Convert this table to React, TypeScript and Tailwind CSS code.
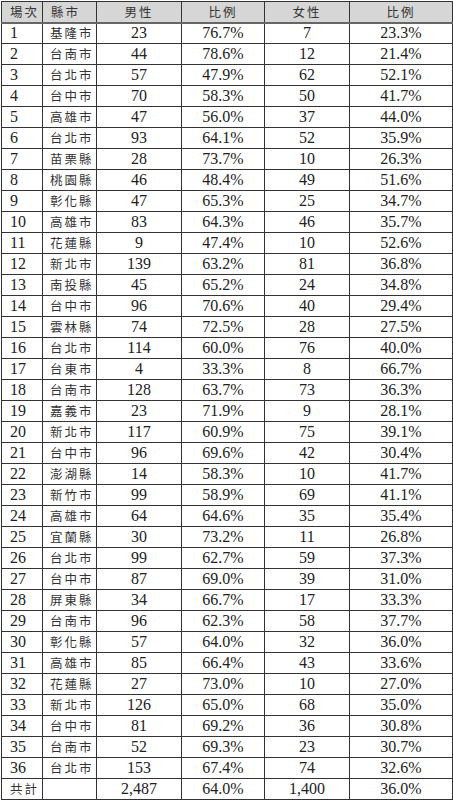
const rows: [string, string, string, string, string, string][] = [
  ["1", "基隆市", "23", "76.7%", "7", "23.3%"],
  ["2", "台南市", "44", "78.6%", "12", "21.4%"],
  ["3", "台北市", "57", "47.9%", "62", "52.1%"],
  ["4", "台中市", "70", "58.3%", "50", "41.7%"],
  ["5", "高雄市", "47", "56.0%", "37", "44.0%"],
  ["6", "台北市", "93", "64.1%", "52", "35.9%"],
  ["7", "苗栗縣", "28", "73.7%", "10", "26.3%"],
  ["8", "桃園縣", "46", "48.4%", "49", "51.6%"],
  ["9", "彰化縣", "47", "65.3%", "25", "34.7%"],
  ["10", "高雄市", "83", "64.3%", "46", "35.7%"],
  ["11", "花蓮縣", "9", "47.4%", "10", "52.6%"],
  ["12", "新北市", "139", "63.2%", "81", "36.8%"],
  ["13", "南投縣", "45", "65.2%", "24", "34.8%"],
  ["14", "台中市", "96", "70.6%", "40", "29.4%"],
  ["15", "雲林縣", "74", "72.5%", "28", "27.5%"],
  ["16", "台北市", "114", "60.0%", "76", "40.0%"],
  ["17", "台東市", "4", "33.3%", "8", "66.7%"],
  ["18", "台南市", "128", "63.7%", "73", "36.3%"],
  ["19", "嘉義市", "23", "71.9%", "9", "28.1%"],
  ["20", "新北市", "117", "60.9%", "75", "39.1%"],
  ["21", "台中市", "96", "69.6%", "42", "30.4%"],
  ["22", "澎湖縣", "14", "58.3%", "10", "41.7%"],
  ["23", "新竹市", "99", "58.9%", "69", "41.1%"],
  ["24", "高雄市", "64", "64.6%", "35", "35.4%"],
  ["25", "宜蘭縣", "30", "73.2%", "11", "26.8%"],
  ["26", "台北市", "99", "62.7%", "59", "37.3%"],
  ["27", "台中市", "87", "69.0%", "39", "31.0%"],
  ["28", "屏東縣", "34", "66.7%", "17", "33.3%"],
  ["29", "台南市", "96", "62.3%", "58", "37.7%"],
  ["30", "彰化縣", "57", "64.0%", "32", "36.0%"],
  ["31", "高雄市", "85", "66.4%", "43", "33.6%"],
  ["32", "花蓮縣", "27", "73.0%", "10", "27.0%"],
  ["33", "新北市", "126", "65.0%", "68", "35.0%"],
  ["34", "台中市", "81", "69.2%", "36", "30.8%"],
  ["35", "台南市", "52", "69.3%", "23", "30.7%"],
  ["36", "台北市", "153", "67.4%", "74", "32.6%"],
];

const cell = "border border-[#333] h-[21px] p-0 leading-none";
const num = "text-center";
const cjk = "font-['Noto_Sans_CJK_TC',sans-serif] text-[12.5px] tracking-[2px] text-[#333]";

const App = () => {
  return (
    <div className="bg-white w-[453px] h-[800px] pl-[1px] pt-[1px] font-['Liberation_Serif','Noto_Sans_CJK_TC',serif] text-[16px] text-[#222]">
      <table className="table-fixed border-collapse w-[451px]">
        <colgroup>
          <col className="w-[41px]" />
          <col className="w-[54px]" />
          <col className="w-[85px]" />
          <col className="w-[83px]" />
          <col className="w-[85px]" />
          <col className="w-[103px]" />
        </colgroup>
        <thead>
          <tr className="bg-[#d6d6d6]">
            <th className={`${cell} ${cjk} border-b-2 border-b-[#666] text-left pl-[8px] font-normal`}>場次</th>
            <th className={`${cell} ${cjk} border-b-2 border-b-[#666] text-left pl-[8px] font-normal`}>縣市</th>
            <th className={`${cell} ${cjk} border-b-2 border-b-[#666] text-center font-normal`}>男性</th>
            <th className={`${cell} ${cjk} border-b-2 border-b-[#666] text-center font-normal`}>比例</th>
            <th className={`${cell} ${cjk} border-b-2 border-b-[#666] text-center font-normal`}>女性</th>
            <th className={`${cell} ${cjk} border-b-2 border-b-[#666] text-center font-normal`}>比例</th>
          </tr>
        </thead>
        <tbody>
          {rows.map((r) => (
            <tr key={r[0]}>
              <td className={`${cell} text-left pl-[8px]`}>{r[0]}</td>
              <td className={`${cell} ${cjk} text-left pl-[7px]`}>{r[1]}</td>
              <td className={`${cell} ${num}`}>{r[2]}</td>
              <td className={`${cell} ${num}`}>{r[3]}</td>
              <td className={`${cell} ${num}`}>{r[4]}</td>
              <td className={`${cell} ${num}`}>{r[5]}</td>
            </tr>
          ))}
          <tr>
            <td className={`${cell} ${cjk} text-left pl-[8px]`}>共計</td>
            <td className={cell}></td>
            <td className={`${cell} ${num}`}>2,487</td>
            <td className={`${cell} ${num}`}>64.0%</td>
            <td className={`${cell} ${num}`}>1,400</td>
            <td className={`${cell} ${num}`}>36.0%</td>
          </tr>
        </tbody>
      </table>
    </div>
  );
};

export default App;
